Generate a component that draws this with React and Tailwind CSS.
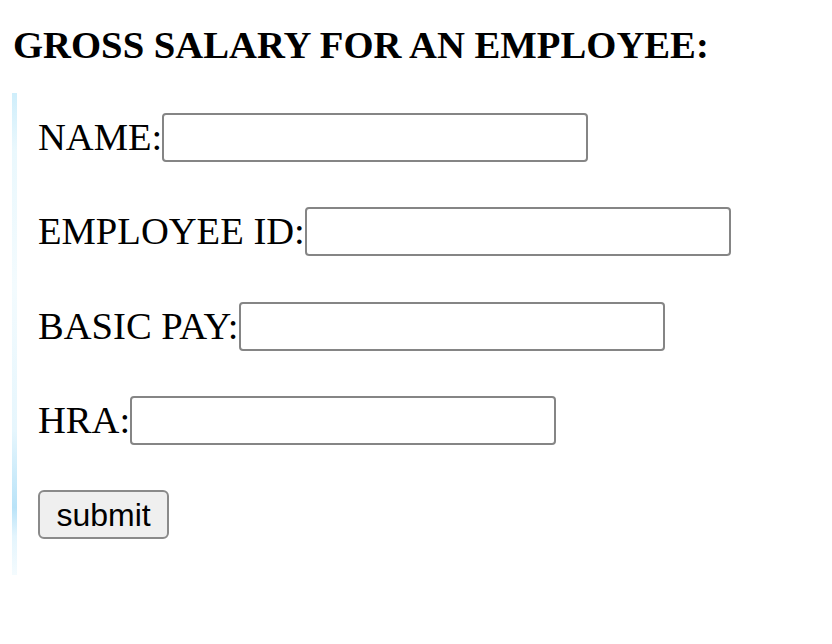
export default function App() {
  const rows = ["NAME:", "EMPLOYEE ID:", "BASIC PAY:", "HRA:"];

  return (
    <div className="min-h-[644px] bg-white pl-[12px] pt-[23px] font-['Liberation_Serif',serif] text-black">
      {/* Heading */}
      <h4 className="m-0 pl-[1px] text-[38.7px] font-bold leading-[44px]">
        GROSS SALARY FOR AN EMPLOYEE:
      </h4>

      <div className="mt-[26px] flex">
        {/* faint left edge */}
        <div className="w-[5px] bg-[linear-gradient(to_bottom,#cfeefb_0%,#eaf8fd_12%,#f3fbfe_40%,#e6f6fd_70%,#b9e3f8_86%,#e4f5fd_92%,#f4fbfe_100%)]" />

        <form className="flex flex-col gap-[45.25px] pb-[36px] pl-[21px] pt-[20px]">
          {rows.map((label) => (
            <div key={label} className="flex h-[49px] items-center">
              <span className="text-[38.6px] leading-[47px] whitespace-nowrap">{label}</span>
              <input
                type="text"
                className="h-[49px] w-[426px] rounded-[4px] border-2 border-[#858585] bg-white px-[4px] outline-none"
              />
            </div>
          ))}

          <div className="flex h-[49px]">
            <button
              type="button"
              className="h-[49px] w-[131px] rounded-[6px] border-2 border-[#8a8a8a] bg-[#efefef] font-['Liberation_Sans',Arial,sans-serif] text-[32px] leading-none text-black"
            >
              submit
            </button>
          </div>
        </form>
      </div>
    </div>
  );
}
